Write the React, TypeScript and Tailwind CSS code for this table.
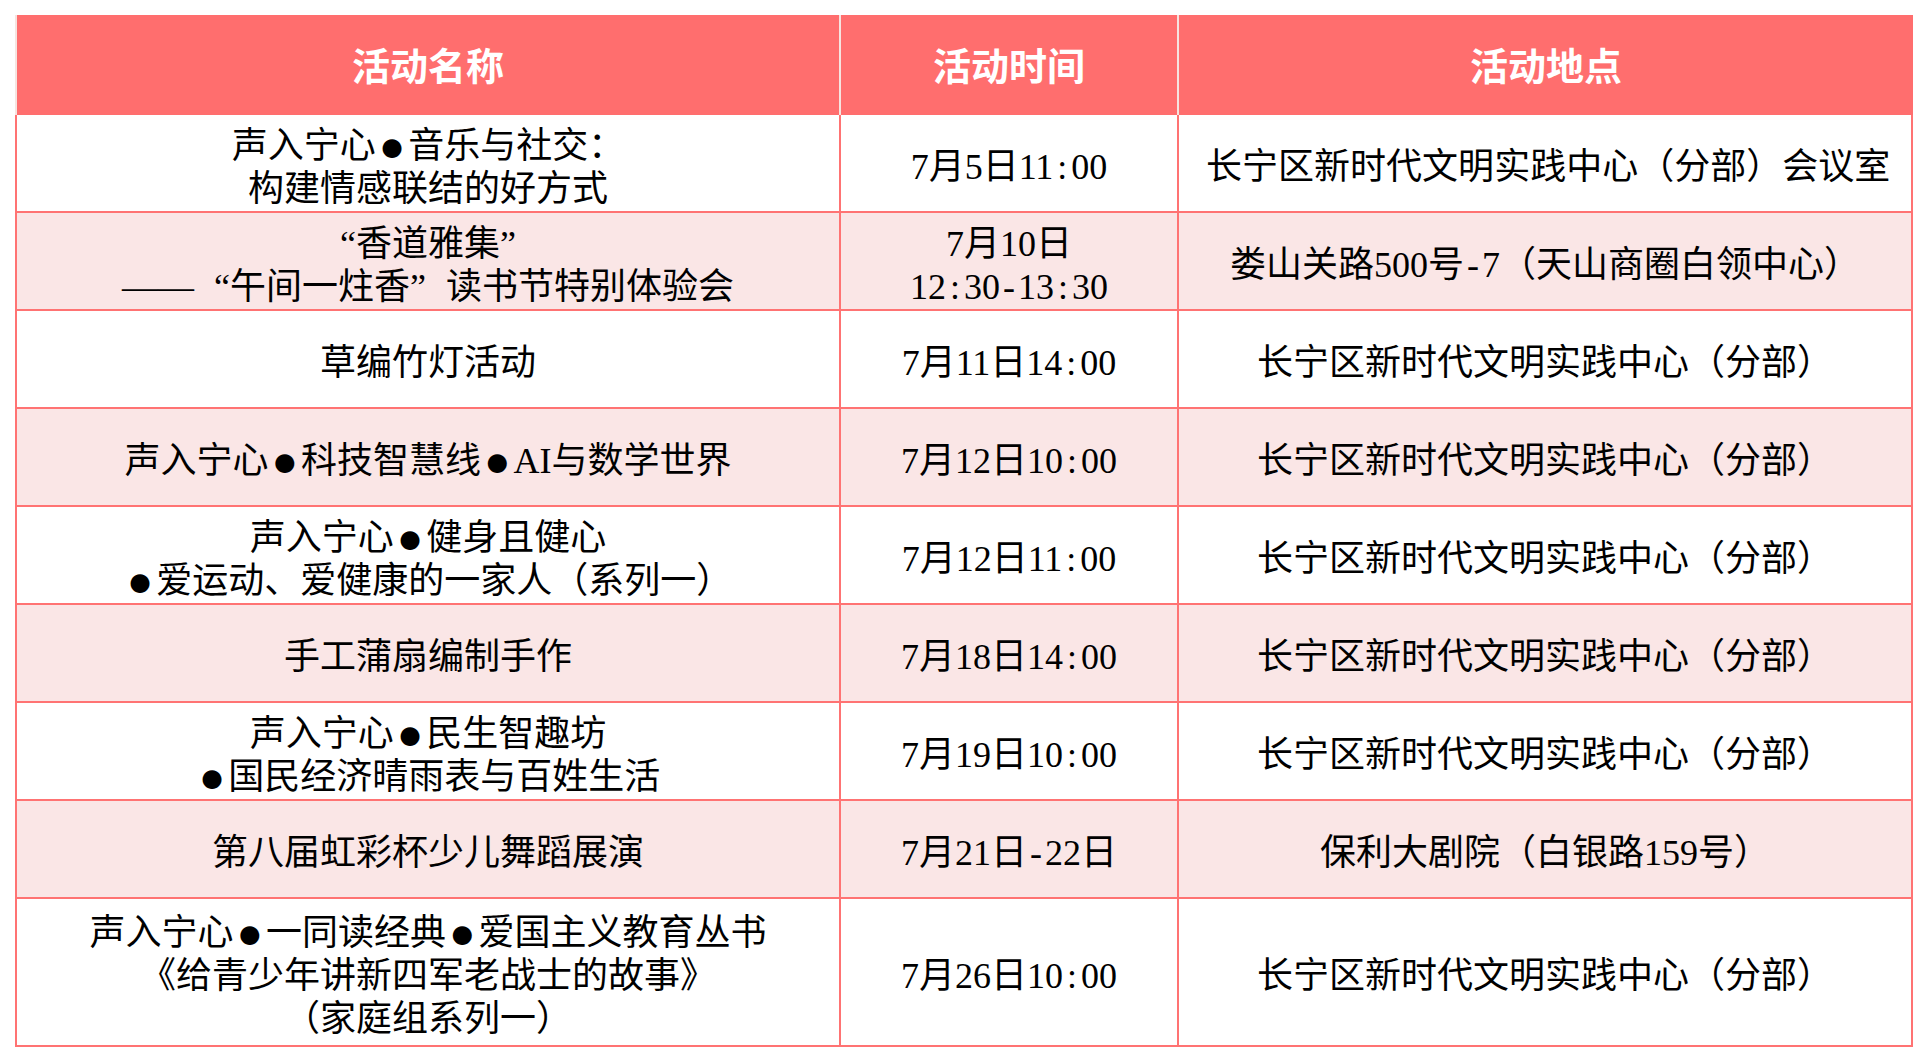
import React from 'react';

const Dot = () => (
  <span className="relative top-[3px] mx-[3px] font-['Liberation_Serif',serif] text-[44px] leading-[0]">
    ●
  </span>
);
const LQ = () => <span className="inline-block w-[1em] text-right">“</span>;
const RQ = () => <span className="inline-block w-[1em] text-left">”</span>;

// colon and hyphen take half an em, as in the source sheet
function fmt(s: string) {
  return s.split('').map((ch, i) =>
    ch === ':' || ch === '-' ? (
      <span key={i} className="inline-block w-[0.5em] text-center">
        {ch}
      </span>
    ) : (
      ch
    )
  );
}

const headers = ['活动名称', '活动时间', '活动地点'];

const PLACE = '长宁区新时代文明实践中心（分部）';

const rows: { name: React.ReactNode[]; time: string[]; place: string }[] = [
  {
    name: [
      <>声入宁心<Dot />音乐与社交：</>,
      <>构建情感联结的好方式</>,
    ],
    time: ['7月5日11:00'],
    place: PLACE + '会议室',
  },
  {
    name: [
      <><LQ />香道雅集<RQ /></>,
      <>——<LQ />午间一炷香<RQ />读书节特别体验会</>,
    ],
    time: ['7月10日', '12:30-13:30'],
    place: '娄山关路500号-7（天山商圈白领中心）',
  },
  { name: [<>草编竹灯活动</>], time: ['7月11日14:00'], place: PLACE },
  {
    name: [<>声入宁心<Dot />科技智慧线<Dot />AI与数学世界</>],
    time: ['7月12日10:00'],
    place: PLACE,
  },
  {
    name: [
      <>声入宁心<Dot />健身且健心</>,
      <><Dot />爱运动、爱健康的一家人（系列一）</>,
    ],
    time: ['7月12日11:00'],
    place: PLACE,
  },
  { name: [<>手工蒲扇编制手作</>], time: ['7月18日14:00'], place: PLACE },
  {
    name: [
      <>声入宁心<Dot />民生智趣坊</>,
      <><Dot />国民经济晴雨表与百姓生活</>,
    ],
    time: ['7月19日10:00'],
    place: PLACE,
  },
  { name: [<>第八届虹彩杯少儿舞蹈展演</>], time: ['7月21日-22日'], place: '保利大剧院（白银路159号）' },
  {
    name: [
      <>声入宁心<Dot />一同读经典<Dot />爱国主义教育丛书</>,
      <>《给青少年讲新四军老战士的故事》</>,
      <>（家庭组系列一）</>,
    ],
    time: ['7月26日10:00'],
    place: PLACE,
  },
];

function Cell(props: { lines: React.ReactNode[]; last?: boolean }) {
  return (
    <div
      className={`${
        props.last ? 'border-r-2' : ''
      } flex flex-col items-center justify-center border-l-2 border-[#ff7373] px-[27px] pt-[9px] text-center whitespace-nowrap`}
    >
      {props.lines.map((line, idx) => (
        <div key={idx} className="w-full">
          {line}
        </div>
      ))}
    </div>
  );
}

function App() {
  return (
    <div className="min-h-[1062px] bg-white pl-[15px] pt-[15px]">
      <div className="w-[1898px]">
        <div className="grid h-[100px] grid-cols-[824px_338px_736px] bg-[#ff6e6e]">
          {headers.map((h, idx) => (
            <div
              key={idx}
              className="flex items-center justify-center border-l-2 border-[#f6e4e0] pb-[4px] font-['Noto_Sans_CJK_SC',sans-serif] text-[38px] font-bold text-white"
            >
              {h}
            </div>
          ))}
        </div>
        {rows.map((row, idx) => (
          <div
            key={idx}
            className={`${idx % 2 === 1 ? 'bg-[#fae6e6]' : 'bg-white'} ${
              idx === rows.length - 1 ? 'h-[148px]' : 'h-[98px]'
            } grid grid-cols-[824px_338px_736px] border-b-2 border-[#ff7373] font-['Liberation_Serif','Noto_Sans_CJK_SC',serif] text-[36px] leading-[43px] text-black`}
          >
            <Cell lines={row.name} />
            <Cell lines={row.time.map((t) => fmt(t))} />
            <Cell lines={[fmt(row.place)]} last />
          </div>
        ))}
      </div>
    </div>
  );
}

export default App;
